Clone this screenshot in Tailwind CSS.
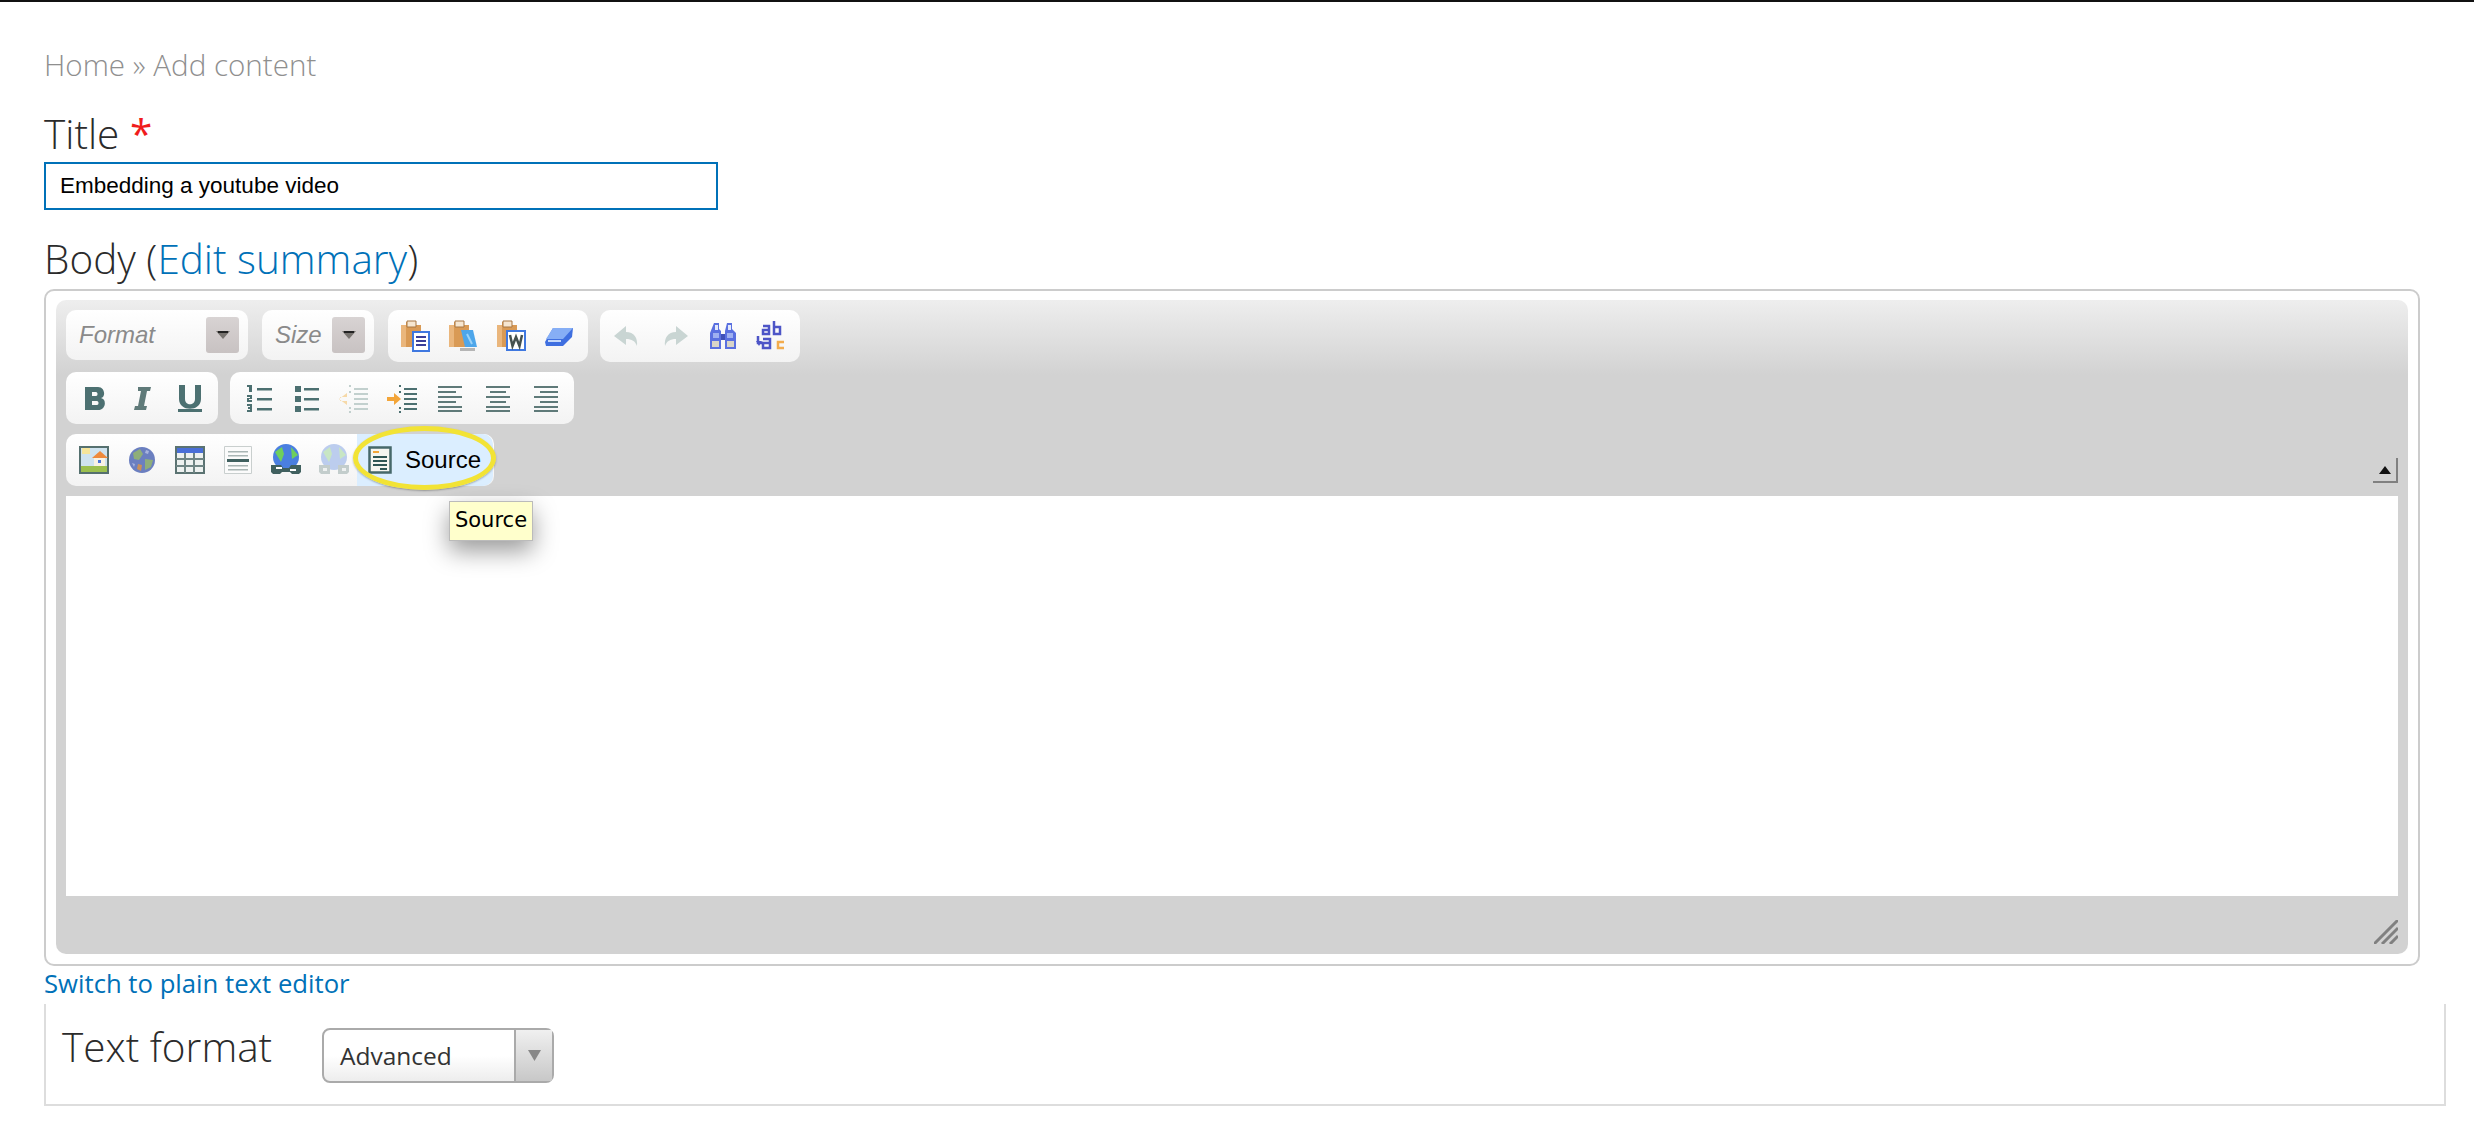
<!DOCTYPE html>
<html lang="en">

<head>
  <meta charset="UTF-8">
  <meta name="viewport" content="width=device-width, initial-scale=1.0">
  <title>Add content</title>
  <script src="https://cdn.jsdelivr.net/npm/@tailwindcss/browser@4"></script>
</head>

<body class="bg-white font-['Open_Sans',sans-serif] overflow-hidden">
  <div class="h-[2px] bg-[#111]"></div>

  <div class="pl-[44px] w-[2446px]">
    <div class="pt-[45px] h-[86px] text-[29.6px] leading-[36px] text-[#8f8f8f] font-light">Home » Add content</div>

    <label class="block mt-[21px] h-[53px] text-[40.5px] leading-[50px] font-light text-[#2b2b2b]">Title <span class="text-[#f01c1c] font-normal">*</span></label>
    <input type="text" value="Embedding a youtube video" class="block w-[674px] h-[48px] border-2 border-[#0071b8] px-[14px] text-[22.5px] text-black font-['Liberation_Sans',sans-serif] outline-none">

    <label class="block mt-[24px] h-[55px] text-[40.5px] leading-[50px] font-light text-[#2b2b2b]">Body (<a class="text-[#0071b8]">Edit summary</a>)</label>

    <div class="w-[2376px] h-[677px] border-2 border-[#ccc] rounded-[10px] pt-[9px] px-[10px]">
      <div class="relative h-[654px] rounded-[10px] bg-[linear-gradient(#eeeeee_0px,#d2d2d2_75px)] px-[10px] pt-[10px]">

        <!-- row 1 -->
        <div class="flex h-[52px] mb-[10px]">
          <div class="w-[182px] h-[50px] mr-[14px] rounded-[10px] bg-gradient-to-b from-white to-[#f3f3f3] flex items-center justify-between pl-[13px] pr-[9px]">
            <span class="italic text-[24px] text-[#8a8a8a] font-['Liberation_Sans',sans-serif]">Format</span>
            <span class="w-[33px] h-[36px] rounded-[3px] bg-gradient-to-b from-[#d8d3d3] to-[#c8c2c2] flex items-center justify-center">
              <svg width="14" height="8" viewBox="0 0 14 8"><path d="M0 0h14L7 8z" fill="#77736f"/><path d="M2 0h10v2H2z" fill="#222"/></svg>
            </span>
          </div>
          <div class="w-[112px] h-[50px] mr-[14px] rounded-[10px] bg-gradient-to-b from-white to-[#f3f3f3] flex items-center justify-between pl-[13px] pr-[9px]">
            <span class="italic text-[24px] text-[#8a8a8a] font-['Liberation_Sans',sans-serif]">Size</span>
            <span class="w-[33px] h-[36px] rounded-[3px] bg-gradient-to-b from-[#d8d3d3] to-[#c8c2c2] flex items-center justify-center">
              <svg width="14" height="8" viewBox="0 0 14 8"><path d="M0 0h14L7 8z" fill="#77736f"/><path d="M2 0h10v2H2z" fill="#222"/></svg>
            </span>
          </div>
          <div class="w-[200px] h-[52px] mr-[12px] rounded-[10px] bg-gradient-to-b from-white to-[#f3f3f3] flex items-center pl-[3px]">
            <!-- paste -->
            <span class="w-[48px] flex justify-center"><svg class="blur-[0.5px]" width="32" height="32" viewBox="0 0 32 32"><path d="M2 5h5V2h10v3h5v22H2z" fill="#d99a55"/><path d="M2 5h5v22H2z" fill="#eab67c"/><path d="M8 1h9v6H8z" fill="#f6e6d0" stroke="#a87642"/><path d="M14 12h16v19H14z" fill="#fff" stroke="#3f78e0" stroke-width="2"/><path d="M17 17h10M17 21h10M17 25h10" stroke="#3a3f9a" stroke-width="2"/></svg></span>
            <!-- paste as text -->
            <span class="w-[48px] flex justify-center"><svg class="blur-[0.5px]" width="32" height="32" viewBox="0 0 32 32"><path d="M2 5h5V2h10v3h5v22H2z" fill="#d99a55"/><path d="M2 5h5v22H2z" fill="#eab67c"/><path d="M8 1h9v6H8z" fill="#f6e6d0" stroke="#a87642"/><path d="M13 28h15v3H13z" fill="#b5b5b5"/><path d="M14 10h12l4 17H18z" fill="#4ea6ea"/><path d="M20 14l5 10" stroke="#9bd2f7" stroke-width="2"/></svg></span>
            <!-- paste from word -->
            <span class="w-[48px] flex justify-center"><svg class="blur-[0.5px]" width="32" height="32" viewBox="0 0 32 32"><path d="M2 5h5V2h10v3h5v22H2z" fill="#d99a55"/><path d="M2 5h5v22H2z" fill="#eab67c"/><path d="M8 1h9v6H8z" fill="#f6e6d0" stroke="#a87642"/><path d="M12 11h18v19H12z" fill="#fff" stroke="#3f78e0" stroke-width="2"/><path d="M15 15l2.500 11 3.500-9 3.500 9 2.500-11" fill="none" stroke="#44504f" stroke-width="2.500"/></svg></span>
            <!-- remove format -->
            <span class="w-[48px] flex justify-center"><svg class="blur-[0.5px]" width="32" height="32" viewBox="0 0 32 32"><path d="M10 8h20l-1 9-9 9H3l-1-4z" fill="#3f6fe0"/><path d="M10 8h20l-10 11H3z" fill="#86aef5"/><path d="M5 21l13 0" stroke="#c5d9fb" stroke-width="2"/></svg></span>
          </div>
          <div class="w-[200px] h-[52px] rounded-[10px] bg-gradient-to-b from-white to-[#f3f3f3] flex items-center pl-[3px]">
            <!-- undo -->
            <span class="w-[48px] flex justify-center"><svg class="blur-[0.5px]" width="32" height="32" viewBox="0 0 32 32"><path d="M15 6L3 16l12 9v-6c6 0 9 2 11 7 1-8-3-14-11-14z" fill="#c9d5d3"/></svg></span>
            <!-- redo -->
            <span class="w-[48px] flex justify-center"><svg class="blur-[0.5px]" width="32" height="32" viewBox="0 0 32 32"><path d="M17 6l12 10-12 9v-6c-6 0-9 2-11 7-1-8 3-14 11-14z" fill="#c9d5d3"/></svg></span>
            <!-- find -->
            <span class="w-[48px] flex justify-center"><svg class="blur-[0.5px]" width="32" height="32" viewBox="0 0 32 32"><path d="M7 3h5v6l2 2v18H4l-1 0V13z" fill="#5a70e0"/><path d="M20 3h5v6l4 4v16H18V11z" fill="#5a70e0"/><path d="M14 14h4v6h-4z" fill="#3f50b8"/><path d="M8 5h3v5H8zM21 5h3v5h-3z" fill="#e3e9fb"/><path d="M6 13h6v5H6zM20 13h6v5h-6z" fill="#9fb0f0"/><path d="M5 21h7v6H5zM20 21h7v6h-7z" fill="#d8d4c8"/></svg></span>
            <!-- replace -->
            <span class="w-[48px] flex justify-center"><svg class="blur-[0.3px]" width="32" height="32" viewBox="0 0 32 32"><g fill="none" stroke="#4d55c7" stroke-width="2.500"><path d="M8 6h6v8H8V10h6"/><path d="M19 1v13h6V7h-6"/><path d="M8 19h7v9H8v-5h7"/><path d="M3 16v7h5"/></g><path d="M1 21h6l-3 5z" fill="#4d55c7"/><path d="M29 22h-6v6h6" fill="none" stroke="#f3ac4d" stroke-width="2.500"/></svg></span>
          </div>
        </div>

        <!-- row 2 -->
        <div class="flex gap-[12px] h-[52px] mb-[10px]">
          <div class="w-[152px] h-[52px] rounded-[10px] bg-gradient-to-b from-white to-[#f3f3f3] flex items-center pl-[4px]">
            <span class="w-[48px] flex justify-center"><svg class="blur-[0.4px]" width="32" height="32" viewBox="0 0 32 32"><path d="M7 5h13c7 0 8 10 3 11 6 1 5 12-3 12H7zm7 5v4h4c2 0 2-4 0-4zm0 9v4h5c2 0 2-4 0-4z" fill="#4c7071" fill-rule="evenodd"/></svg></span>
            <span class="w-[48px] flex justify-center"><svg class="blur-[0.4px]" width="32" height="32" viewBox="0 0 32 32"><path d="M12 5h13l-1 4h-3l-3 15h3l-1 4H8l1-4h3l3-15h-3z" fill="#5f7a79"/></svg></span>
            <span class="w-[48px] flex justify-center"><svg class="blur-[0.4px]" width="32" height="32" viewBox="0 0 32 32"><path d="M5 3h6v14c0 7 10 7 10 0V3h6v14c0 13-22 13-22 0z" fill="#4c7071"/><path d="M4 27h24v3H4z" fill="#4c7071"/></svg></span>
          </div>
          <div class="w-[344px] h-[52px] rounded-[10px] bg-gradient-to-b from-white to-[#f3f3f3] flex items-center pl-[5px]">
            <!-- numbered list -->
            <span class="w-[47.8px] flex justify-center"><svg class="blur-[0.4px]" width="32" height="32" viewBox="0 0 32 32"><path d="M4 3h5v7H6V5H4zM4 13h5v4H6v1h3v2H4v-4h3v-1H4zM4 22h5v8H4v-2h3v-1H5v-2h2v-1H4z" fill="#4c7071"/><path d="M14 6h15v2.500H14zM14 16h15v2.500H14zM14 26h15v2.500H14z" fill="#4c7071"/></svg></span>
            <!-- bullet list -->
            <span class="w-[47.8px] flex justify-center"><svg class="blur-[0.4px]" width="32" height="32" viewBox="0 0 32 32"><path d="M4 4h6v6H4zM4 14h6v6H4zM4 24h6v6H4z" fill="#4c7071"/><path d="M13 6h15v2.500H13zM13 16h15v2.500H13zM13 26h15v2.500H13z" fill="#4c7071"/></svg></span>
            <!-- outdent -->
            <span class="w-[47.8px] flex justify-center"><svg class="blur-[0.4px]" width="32" height="32" viewBox="0 0 32 32"><path d="M9 10v4H2v4h7v4l-8-6z" fill="#f6d9a8" transform="translate(0 1)"/><path d="M16 6h14v2H16zM16 11h14v2H16zM16 16h14v2H16zM16 21h14v2H16zM16 26h14v2H16z" fill="#c2d0ce"/><path d="M11 3h2v2h-2zM11 9h2v2h-2zM11 25h2v2h-2zM11 29h2v2h-2z" fill="#c2d0ce"/></svg></span>
            <!-- indent -->
            <span class="w-[47.8px] flex justify-center"><svg class="blur-[0.4px]" width="32" height="32" viewBox="0 0 32 32"><path d="M8 10v4h-7v4h7v4l7-6z" fill="#f3a539" transform="translate(0 1)"/><path d="M18 6h13v2H18zM18 11h13v2H18zM18 16h13v2H18zM18 21h13v2H18zM18 26h13v2H18z" fill="#4c7071"/><path d="M13 3h2v2h-2zM13 9h2v2h-2zM13 25h2v2h-2zM13 29h2v2h-2z" fill="#4c7071"/></svg></span>
            <!-- align left -->
            <span class="w-[47.8px] flex justify-center"><svg class="blur-[0.4px]" width="32" height="32" viewBox="0 0 32 32"><path d="M4 4h24v2H4zM4 9h18v2H4zM4 14h24v2H4zM4 19h18v2H4zM4 24h24v2H4z M4 28h24v2H4z" fill="#5f7a79"/></svg></span>
            <!-- align center -->
            <span class="w-[47.8px] flex justify-center"><svg class="blur-[0.4px]" width="32" height="32" viewBox="0 0 32 32"><path d="M4 4h24v2H4zM8 9h16v2H8zM4 14h24v2H4zM8 19h16v2H8zM4 24h24v2H4zM4 28h24v2H4z" fill="#5f7a79"/></svg></span>
            <!-- align right -->
            <span class="w-[47.8px] flex justify-center"><svg class="blur-[0.4px]" width="32" height="32" viewBox="0 0 32 32"><path d="M4 4h24v2H4zM10 9h18v2H10zM4 14h24v2H4zM10 19h18v2H10zM4 24h24v2H4zM4 28h24v2H4z" fill="#5f7a79"/></svg></span>
          </div>
        </div>

        <!-- row 3 -->
        <div class="h-[52px] mb-[10px] w-[428px] rounded-[10px] bg-gradient-to-b from-white to-[#f3f3f3] flex items-center pl-[4px]">
          <!-- image -->
          <span class="w-[48px] flex justify-center"><svg class="blur-[0.4px]" width="32" height="32" viewBox="0 0 32 32"><path d="M2 3h28v26H2z" fill="#cfe3ef" stroke="#55706f" stroke-width="2"/><path d="M3 22h26v6H3z" fill="#9cc04f"/><path d="M4 4h8v6H4z" fill="#f6e59a"/><path d="M14 14l8-7 8 7z" fill="#ee8a3c"/><path d="M16 14h11v8H16z" fill="#f8f2e4"/><path d="M20 16h3v3h-3z" fill="#4a73d8"/></svg></span>
          <!-- flash -->
          <span class="w-[48px] flex justify-center"><svg class="blur-[0.7px]" width="32" height="32" viewBox="0 0 32 32"><circle cx="16" cy="16" r="13" fill="#6b7fc0"/><path d="M7 9l7-4 3 5-4 6-5-1zM19 15l8 1-2 7-6 3z" fill="#8fae7a"/><path d="M12 20l4 1-1 6-4-2z" fill="#c9905a"/><path d="M20 6l3 1-1 3-3-1zM6 19l3 1-1 3z" fill="#a8b4dd"/></svg></span>
          <!-- table -->
          <span class="w-[48px] flex justify-center"><svg class="blur-[0.5px]" width="32" height="32" viewBox="0 0 32 32"><path d="M2 3h28v26H2z" fill="#edf1f0" stroke="#5b7372" stroke-width="2"/><path d="M3 4h26v5H3z" fill="#4a6fd8"/><path d="M2 15h28M2 22h28M11 9v20M20 9v20" stroke="#6f8584" stroke-width="2"/></svg></span>
          <!-- horizontal rule -->
          <span class="w-[48px] flex justify-center"><svg class="blur-[0.4px]" width="32" height="32" viewBox="0 0 32 32"><path d="M2.500 2.500h27v27h-27z" fill="#fbfbfb" stroke="#c9cfce"/><path d="M6 7h20v1.500H6zM6 11h20v1.500H6zM6 21h20v1.500H6zM6 25h20v1.500H6z" fill="#a9b5b4"/><path d="M5 15h22v3H5z" fill="#40605f"/></svg></span>
          <!-- link -->
          <span class="w-[48px] flex justify-center"><svg class="blur-[0.4px]" width="32" height="32" viewBox="0 0 32 32"><circle cx="16" cy="13" r="13" fill="#4a7fe0"/><path d="M5 8l7-5 2 7-3 8zM21 3l7 8-6 4z" fill="#6fcf5c"/><path d="M1 21h10l2 3h6l2-3h10v7l-2 2H22l-2-2h-8l-2 2H3l-2-2z" fill="#40605f"/><path d="M6 24h6M20 26h6" stroke="#fff" stroke-width="2"/></svg></span>
          <!-- unlink -->
          <span class="w-[48px] flex justify-center"><svg class="blur-[0.4px]" width="32" height="32" viewBox="0 0 32 32"><circle cx="16" cy="13" r="13" fill="#bccdee"/><path d="M5 8l7-5 2 7-3 8zM21 3l7 8-6 4z" fill="#c8e6c4"/><path d="M1 21h11v9H3l-2-2zM20 21h11v7l-2 2h-9z" fill="#c3cdcc"/><path d="M5 24h4v3H5zM24 24h4v3h-4z" fill="#eef1f1"/></svg></span>
          <!-- source button, ringed in yellow -->
          <div class="relative flex items-center w-[136px] h-[52px] rounded-r-[10px] bg-[#dbeeff] pl-[11px] -ml-[1px]">
            <svg class="shrink-0 blur-[0.3px]" width="24" height="28" viewBox="0 0 24 28"><path d="M1.500 1.500h21v25h-21z" fill="#f5f5f0" stroke="#46686a" stroke-width="2.500"/><path d="M5 5h6v2H5z" fill="#f3a539"/><path d="M5 10h14v2H5zM5 14h14v2H5zM5 18h14v2H5zM12 22h7v2h-7z" fill="#2f5554"/></svg>
            <span class="ml-[13px] text-[24px] text-black font-['Liberation_Sans',sans-serif]">Source</span>
            <div class="absolute -left-[4px] -right-[3px] -top-[8px] -bottom-[4px] rounded-[50%] border-[5px] border-[#f2e335] shadow-[0_1px_2px_rgba(0,0,0,0.3)]"></div>
          </div>
        </div>

        <!-- collapse toolbar -->
        <div class="absolute right-[10px] top-[158px] w-[25px] h-[25px] border-r-2 border-b-2 border-[#808080] flex items-center justify-center">
          <svg width="12" height="8" viewBox="0 0 12 8"><path d="M6 0l6 8H0z" fill="#111"/></svg>
        </div>

        <div class="h-[400px] bg-white"></div>

        <!-- resize grip -->
        <svg class="absolute right-[10px] bottom-[10px]" width="24" height="24" viewBox="0 0 24 24"><path d="M0 24L24 0M8 24L24 8M16 24l8-8" stroke="#808080" stroke-width="3"/></svg>

        <!-- tooltip -->
        <div class="absolute left-[393px] top-[201px] w-[84px] h-[40px] border border-[#bbb] bg-[#ffffcc] text-[21px] leading-[36px] text-center text-black font-['DejaVu_Sans',sans-serif] shadow-[0_10px_24px_rgba(0,0,0,0.4)]">Source</div>
      </div>
    </div>

    <a class="block h-[38px] text-[25.7px] leading-[36px] text-[#0071b8]">Switch to plain text editor</a>

    <div class="h-[102px] border-l-2 border-r-2 border-b-2 border-[#ddd] flex pl-[16px]">
      <span class="w-[260px] pt-[15px] text-[40.5px] leading-[56px] font-light text-[#2b2b2b]">Text format</span>
      <div class="mt-[24px] w-[232px] h-[55px] border-2 border-[#aaa] rounded-[8px] bg-gradient-to-b from-white from-50% to-[#ededed] flex text-[#333]">
        <span class="flex-1 pl-[16px] text-[24.5px] leading-[51px]">Advanced</span>
        <span class="w-[38px] border-l-2 border-[#aaa] bg-gradient-to-b from-[#f0f0f0] to-[#c8c8c8] flex items-center justify-center">
          <svg width="13" height="13" viewBox="0 0 13 13"><path d="M0 1h13L6.500 12z" fill="#888"/></svg>
        </span>
      </div>
    </div>
  </div>
</body>

</html>
